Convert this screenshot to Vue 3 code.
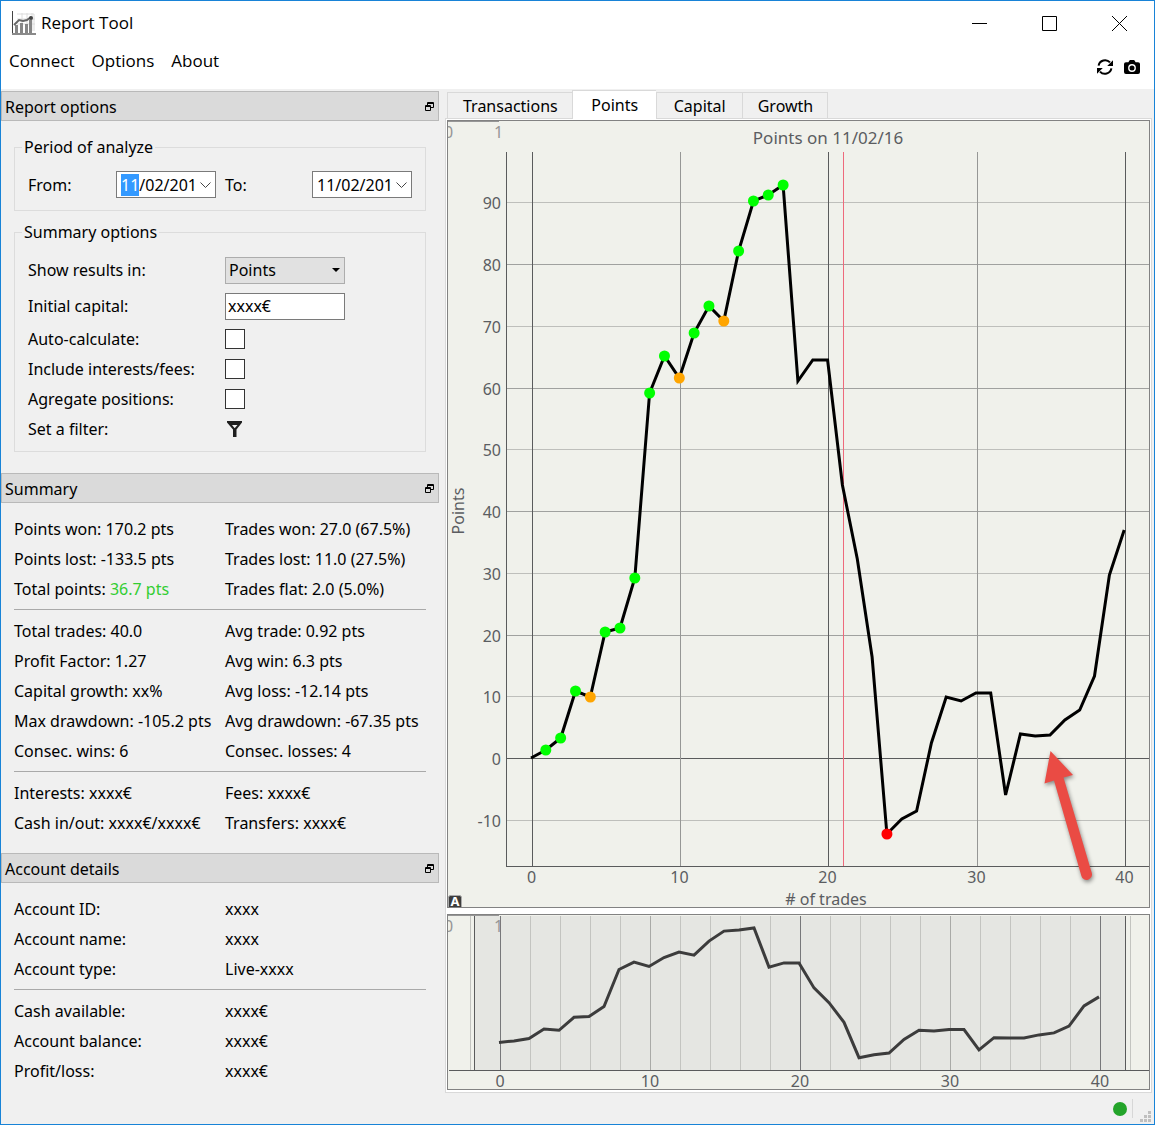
<script setup>
import { onMounted, ref } from 'vue'

const menus = ['Connect', 'Options', 'About']
const tabs = ['Transactions', 'Points', 'Capital', 'Growth']
const activeTab = ref('Points')
const fromField = ref(null)
const from = ref('11/02/2016')
const to = ref('11/02/2016')
const unit = ref('Points')
const capital = ref('xxxx€')

const toggles = [
  { id: 'auto', label: 'Auto-calculate:' },
  { id: 'fees', label: 'Include interests/fees:' },
  { id: 'agregate', label: 'Agregate positions:' }
]

const summary = [
  [
    ['Points won', '170.2 pts'], ['Trades won', '27.0 (67.5%)'],
    ['Points lost', '-133.5 pts'], ['Trades lost', '11.0 (27.5%)'],
    ['Total points', '36.7 pts', true], ['Trades flat', '2.0 (5.0%)']
  ],
  [
    ['Total trades', '40.0'], ['Avg trade', '0.92 pts'],
    ['Profit Factor', '1.27'], ['Avg win', '6.3 pts'],
    ['Capital growth', 'xx%'], ['Avg loss', '-12.14 pts'],
    ['Max drawdown', '-105.2 pts'], ['Avg drawdown', '-67.35 pts'],
    ['Consec. wins', '6'], ['Consec. losses', '4']
  ],
  [
    ['Interests', 'xxxx€'], ['Fees', 'xxxx€'],
    ['Cash in/out', 'xxxx€/xxxx€'], ['Transfers', 'xxxx€']
  ]
]

const account = [
  [['Account ID:', 'xxxx'], ['Account name:', 'xxxx'], ['Account type:', 'Live-xxxx']],
  [['Cash available:', 'xxxx€'], ['Account balance:', 'xxxx€'], ['Profit/loss:', 'xxxx€']]
]

// Vertical chart position of the running total after each trade.
const track = [
  758, 750, 738, 691, 697, 632, 628, 578, 393, 356, 378, 333, 306, 321, 251,
  201, 195, 185, 381, 360, 360, 485, 559, 657, 834, 819, 811, 743, 697, 701,
  693, 693, 795, 734, 736, 735, 720, 710, 676, 575, 530
]
const mainX = (i) => 531 + i * 14.83
const mainLine = track.map((y, i) => `${mainX(i).toFixed(1)},${y}`).join(' ')
const miniLine = track
  .map((y, i) => `${499 + i * 15},${(1042.5 + (y - 758) * 0.2).toFixed(1)}`)
  .join(' ')
const markers = track.slice(1, 18).map((y, k) => ({
  x: mainX(k + 1),
  y,
  color: [4, 10, 13].includes(k + 1) ? '#ffa500' : '#00ff00'
}))
markers.push({ x: mainX(24), y: 834, color: '#ff0000' })

const rows = [90, 80, 70, 60, 50, 40, 30, 20, 10, 0, -10].map((v) => ({
  v,
  y: Math.round(758 - v * 6.175) + 0.5,
  color: v === 0 ? '#5a5b5c' : v % 20 === 0 ? '#a0a19f' : '#bebfbb'
}))
const cols = [532, 680, 828, 977, 1125].map((x, i) => ({
  x: x + 0.5,
  v: i * 10,
  color: i % 2 ? '#969795' : '#5a5b5c'
}))
const miniCols = Array.from({ length: 23 }, (_, i) => ({
  x: 470.5 + i * 30,
  color: (i - 1) % 10 === 0 ? '#77787a' : (i - 1) % 5 === 0 ? '#a9aaa7' : '#c3c4c0'
}))

onMounted(() => {
  fromField.value.focus({ preventScroll: true })
  fromField.value.setSelectionRange(0, 2)
})
</script>

<template>
  <div class="window">
    <header class="titlebar">
      <svg class="app-icon" width="25" height="25" viewBox="0 0 25 25">
        <path d="M5 3H22V20M5 8H23M5 13H23M10 2V20M15 2V20M20 2V20" fill="none" stroke="#dcdcdc" />
        <rect x="0" y="0" width="1" height="23" fill="#444" />
        <rect x="0" y="22" width="24" height="2" fill="#8a8a8a" />
        <path d="M3 14h3v8H3zM8 12h3v10H8zM13 13h3v9h-3zM17 9h3v13h-3z" fill="#868686" />
        <path d="M2 14L7 9L11 10L15 9L19 6" fill="none" stroke="#666" stroke-width="2" />
        <circle cx="19" cy="7" r="2" fill="#444" />
      </svg>
      <h1>Report Tool</h1>
      <div class="controls">
        <button aria-label="Minimize"><svg width="15" height="15"><path d="M0 7.5H15" /></svg></button>
        <button aria-label="Maximize"><svg width="15" height="15"><path d="M.5 .5H14.5V14.5H.5Z" /></svg></button>
        <button aria-label="Close"><svg width="15" height="15"><path d="M0 0L15 15M15 0L0 15" /></svg></button>
      </div>
    </header>

    <nav class="menubar">
      <div class="menus">
        <button v-for="m in menus" :key="m">{{ m }}</button>
      </div>
      <div class="tools">
        <button aria-label="Refresh">
          <svg width="16" height="16" viewBox="0 0 16 16">
            <path d="M1.6 6.6A6.6 6.6 0 0 1 13 3.4M14.4 9.4A6.6 6.6 0 0 1 3 12.6" fill="none" stroke="#000" stroke-width="2" />
            <path d="M16 1.2V7H10.2ZM0 14.8V9H5.8Z" />
          </svg>
        </button>
        <button aria-label="Screenshot">
          <svg width="16" height="16" viewBox="0 0 16 16">
            <path d="M2 3.2H4.4L5.4 1.4Q5.6 1 6.2 1H9.8Q10.4 1 10.6 1.4L11.6 3.2H14Q16 3.2 16 5V13Q16 15 14 15H2Q0 15 0 13V5Q0 3.2 2 3.2Z" />
            <circle cx="8" cy="9" r="3.2" fill="none" stroke="#fff" stroke-width="1.4" />
          </svg>
        </button>
      </div>
    </nav>

    <main class="body">
      <aside class="docks">
        <section>
          <header class="dock-title">
            <h2>Report options</h2>
            <button aria-label="Float report options">
              <svg width="9" height="9"><path d="M2.5 3V.5H8.5V5.5H6M3 1.5H8M.5 3.5H5.5V8.5H.5ZM1 4.5H5" /></svg>
            </button>
          </header>
          <div class="options">
            <fieldset class="period">
              <legend>Period of analyze</legend>
              <label for="from">From:</label>
              <div class="date">
                <input id="from" ref="fromField" v-model="from" type="text" />
                <button aria-label="Pick start date"><svg width="11" height="6"><path d="M.5 .5L5.5 5.5L10.5 .5" /></svg></button>
              </div>
              <label for="to">To:</label>
              <div class="date">
                <input id="to" v-model="to" type="text" />
                <button aria-label="Pick end date"><svg width="11" height="6"><path d="M.5 .5L5.5 5.5L10.5 .5" /></svg></button>
              </div>
            </fieldset>
            <fieldset class="choices">
              <legend>Summary options</legend>
              <div class="choice tall">
                <label for="unit">Show results in:</label>
                <div class="combo">
                  <select id="unit" v-model="unit">
                    <option>Points</option>
                    <option>Capital</option>
                    <option>Growth</option>
                  </select>
                  <svg width="8" height="4"><path d="M0 0H8L4 4Z" /></svg>
                </div>
              </div>
              <div class="choice tall">
                <label for="capital">Initial capital:</label>
                <input id="capital" v-model="capital" class="text" type="text" />
              </div>
              <div v-for="t in toggles" :key="t.id" class="choice">
                <label :for="t.id">{{ t.label }}</label>
                <input :id="t.id" class="check" type="checkbox" />
              </div>
              <div class="choice">
                <label for="filter">Set a filter:</label>
                <button id="filter" class="filter">
                  <svg width="16" height="16" viewBox="0 0 16 16">
                    <path fill-rule="evenodd" d="M0 0H15V1.5L9.5 8.5V16H6V8.5L0 1.5ZM5 4L7.7 7.2L10.5 4Z" fill="#1e1e1e" />
                  </svg>
                </button>
              </div>
            </fieldset>
          </div>
        </section>

        <section>
          <header class="dock-title">
            <h2>Summary</h2>
            <button aria-label="Float summary">
              <svg width="9" height="9"><path d="M2.5 3V.5H8.5V5.5H6M3 1.5H8M.5 3.5H5.5V8.5H.5ZM1 4.5H5" /></svg>
            </button>
          </header>
          <div class="details">
            <div v-for="(group, g) in summary" :key="g" class="group">
              <p v-for="item in group" :key="item[0]">
                {{ item[0] }}: <span :class="{ gain: item[2] }">{{ item[1] }}</span>
              </p>
            </div>
          </div>
        </section>

        <section>
          <header class="dock-title">
            <h2>Account details</h2>
            <button aria-label="Float account details">
              <svg width="9" height="9"><path d="M2.5 3V.5H8.5V5.5H6M3 1.5H8M.5 3.5H5.5V8.5H.5ZM1 4.5H5" /></svg>
            </button>
          </header>
          <div class="details last">
            <dl v-for="(group, g) in account" :key="g" class="group">
              <template v-for="item in group" :key="item[0]">
                <dt>{{ item[0] }}</dt>
                <dd>{{ item[1] }}</dd>
              </template>
            </dl>
          </div>
        </section>
      </aside>

      <section class="workspace">
        <div class="tabs" role="tablist">
          <button
            v-for="t in tabs"
            :key="t"
            role="tab"
            :aria-selected="t === activeTab"
            :class="{ active: t === activeTab }"
            @click="activeTab = t"
          >{{ t }}</button>
        </div>
        <div class="pane">
          <svg class="chart" viewBox="448 121 701 786">
            <path d="M448 121.5H499" class="ghost" />
            <text x="444" y="138" class="faint">0</text>
            <text x="494" y="138" class="faint">1</text>
            <text x="828" y="144" text-anchor="middle" class="heading">Points on 11/02/16</text>
            <g class="grid">
              <path v-for="r in rows" :key="r.v" :d="`M506 ${r.y}H1149`" :stroke="r.color" />
              <path v-for="c in cols" :key="c.v" :d="`M${c.x} 152V866`" :stroke="c.color" />
              <path d="M506.5 152V866.5H1149" stroke="#5a5b5c" />
              <path d="M843.5 152V866" stroke="#ee6a7c" />
            </g>
            <text v-for="r in rows" :key="r.v" x="501" :y="r.y + 6" text-anchor="end">{{ r.v }}</text>
            <text v-for="c in cols" :key="c.v" :x="c.x - 1" y="883" text-anchor="middle">{{ c.v }}</text>
            <text x="826" y="905" text-anchor="middle"># of trades</text>
            <text transform="translate(464 511) rotate(-90)" text-anchor="middle">Points</text>
            <polyline :points="mainLine" fill="none" stroke="#000" stroke-width="3" />
            <circle v-for="m in markers" :key="m.x" :cx="m.x" :cy="m.y" r="5.5" :fill="m.color" />
            <rect x="448.5" y="895.5" width="13" height="13" rx="2" fill="#3c3c3c" stroke="#aaa" />
            <text x="455" y="906" text-anchor="middle" class="auto">A</text>
            <path
              class="pointer"
              d="M1050.5 751L1073 775L1063.5 777.5L1091.8 873A5.4 5.4 0 0 1 1081.4 876L1054 780.5L1044.5 783.5Z"
            />
          </svg>
          <svg class="chart" viewBox="448 915 701 174">
            <rect x="474" y="916" width="651" height="154" fill="#e5e6e2" />
            <path d="M448 915.5H499" class="ghost" />
            <g class="grid">
              <path v-for="c in miniCols" :key="c.x" :d="`M${c.x} 916V1070`" :stroke="c.color" />
              <path d="M474.5 916V1070M1125.5 916V1070M449 1070.5H1149" stroke="#5a5b5c" />
            </g>
            <text x="444" y="932" class="faint">0</text>
            <text x="494" y="932" class="faint">1</text>
            <text v-for="(c, i) in cols" :key="c.v" :x="500 + i * 150" y="1087" text-anchor="middle">{{ c.v }}</text>
            <polyline :points="miniLine" fill="none" stroke="#3c3c3c" stroke-width="3" />
          </svg>
        </div>
      </section>
    </main>

    <footer class="status">
      <i class="online"></i>
      <i class="divider"></i>
      <svg width="11" height="11">
        <path d="M8 0h3v3h-3zM4 4h3v3h-3zM8 4h3v3h-3zM0 8h3v3h-3zM4 8h3v3h-3zM8 8h3v3h-3z" fill="#bfbfbf" />
      </svg>
    </footer>
  </div>
</template>

<style>
body {
  margin: 0;
}
</style>

<style scoped>
* {
  box-sizing: border-box;
}
.window {
  min-height: 100vh;
  display: flex;
  flex-direction: column;
  border: 1px solid #1883d7;
  background: #f0f0f0;
  color: #000;
  font: 16px/22px "Noto Sans", "Open Sans", sans-serif;
}
button {
  margin: 0;
  padding: 0;
  border: 0;
  background: none;
  color: inherit;
  font: inherit;
}
svg {
  display: block;
}
h1,
h2,
p,
dl,
dd {
  margin: 0;
  font-weight: 400;
}
.titlebar,
.menubar {
  display: flex;
  background: #fff;
  font: 17px/24px "Open Sans", "Noto Sans", sans-serif;
}
.titlebar {
  height: 44px;
  align-items: center;
  padding-left: 11px;
  gap: 4px;
}
h1 {
  font-size: 17px;
}
.controls {
  display: flex;
  margin-left: auto;
}
.controls button {
  width: 70px;
  height: 43px;
  display: grid;
  place-items: center;
}
.controls path {
  fill: none;
  stroke: #000;
}
.menubar {
  height: 44px;
  justify-content: space-between;
  padding: 0 14px 0 8px;
}
.menus {
  display: flex;
  gap: 17px;
}
.menus button {
  height: 32px;
}
.tools {
  display: flex;
  align-items: center;
  gap: 11px;
}
.body {
  display: flex;
  align-items: flex-start;
}
.docks {
  flex: 0 0 438px;
  padding-top: 2px;
}
.dock-title {
  display: flex;
  align-items: center;
  justify-content: space-between;
  height: 30px;
  padding: 1px 4px 0 3px;
  border: 1px solid #b9b9b9;
  background: #dadada;
}
.docks h2 {
  font-size: 16px;
}
.dock-title path {
  fill: none;
  stroke: #000;
}
.options {
  padding: 15px 13px 21px;
}
fieldset {
  margin: 0;
  border: 1px solid #dcdcdc;
}
legend {
  margin-left: -6px;
  padding: 0 2px;
}
.period {
  display: grid;
  grid-template-columns: 88px 109px 87px 100px;
  align-items: center;
  padding: 13px 13px 12px;
}
.choices {
  margin-top: 10px;
  padding: 9px 13px 7px;
}
.choice {
  display: grid;
  grid-template-columns: 197px 120px;
  align-items: center;
  height: 30px;
}
.tall {
  height: 36px;
}
.date {
  display: flex;
  align-items: center;
  width: 100px;
  height: 27px;
  border: 1px solid #7a7a7a;
  background: #fff;
}
.date input {
  width: 76px;
  height: 23px;
  margin-left: 4px;
  padding: 0;
  border: 0;
  outline: 0;
  background: none;
  font: inherit;
  caret-color: transparent;
}
.date input::selection {
  background: #3399ff;
  color: #fff;
}
.date button {
  padding: 3px;
}
.date path {
  fill: none;
  stroke: #444;
}
.combo {
  display: grid;
  align-items: center;
}
.combo > * {
  grid-area: 1 / 1;
}
.combo svg {
  justify-self: end;
  margin-right: 5px;
  pointer-events: none;
}
select {
  appearance: none;
  width: 120px;
  height: 27px;
  padding: 0 3px;
  border: 1px solid #adadad;
  border-radius: 0;
  background: #e1e1e1;
  color: inherit;
  font: inherit;
}
.text {
  width: 120px;
  height: 27px;
  padding: 0 2px;
  border: 1px solid #7a7a7a;
  background: #fff;
  font: inherit;
}
.check {
  appearance: none;
  width: 20px;
  height: 20px;
  margin: 0;
  border: 1px solid #333;
  background: #fff;
}
.filter {
  justify-self: start;
  padding-left: 2px;
}
.details {
  padding: 11px 13px 15px;
}
.details.last {
  padding-bottom: 0;
}
.group {
  display: grid;
  grid-template-columns: 211px 1fr;
  line-height: 30px;
  white-space: nowrap;
}
.group + .group {
  margin-top: 5px;
  padding-top: 6px;
  border-top: 1px solid #a9a9a9;
}
.gain {
  color: #32cd32;
}
.workspace {
  flex: 1;
  min-width: 0;
  margin: 0 2px 0 6px;
}
.tabs {
  display: flex;
  align-items: flex-end;
  height: 29px;
  padding-left: 2px;
}
.tabs button {
  min-width: 86px;
  height: 26px;
  padding: 0 14px 0 15px;
  border: 1px solid #d9d9d9;
  border-width: 1px 0 0 1px;
}
.tabs button:last-child {
  border-right-width: 1px;
}
.tabs .active {
  min-width: 84px;
  height: 29px;
  margin-bottom: -1px;
  padding-bottom: 1px;
  background: #fff;
  z-index: 1;
}
.pane {
  display: flex;
  flex-direction: column;
  gap: 6px;
  padding: 1px 1px 2px;
  border: 1px solid #d9d9d9;
  background: #fff;
}
.chart {
  width: 100%;
  height: auto;
  border: 1px solid #828282;
  background: #f0f1eb;
  fill: #5b5d61;
  font-size: 16px;
}
.heading {
  font-size: 17px;
}
.faint {
  fill: #969696;
}
.ghost {
  stroke: #969696;
}
.grid path {
  fill: none;
  shape-rendering: crispEdges;
}
.auto {
  fill: #fff;
  font-size: 13px;
  font-weight: 700;
}
.pointer {
  fill: #ea4b44;
  filter: drop-shadow(1px 2px 2px rgba(0, 0, 0, 0.45));
}
.status {
  display: flex;
  align-items: center;
  justify-content: flex-end;
  flex: 1;
  min-height: 31px;
  padding-right: 3px;
}
.online {
  width: 14px;
  height: 14px;
  border-radius: 50%;
  background: #23a42a;
}
.divider {
  width: 1px;
  height: 19px;
  margin: 0 7px 0 5px;
  background: #d7d7d7;
}
.status svg {
  align-self: flex-end;
  margin-bottom: 2px;
}
</style>
